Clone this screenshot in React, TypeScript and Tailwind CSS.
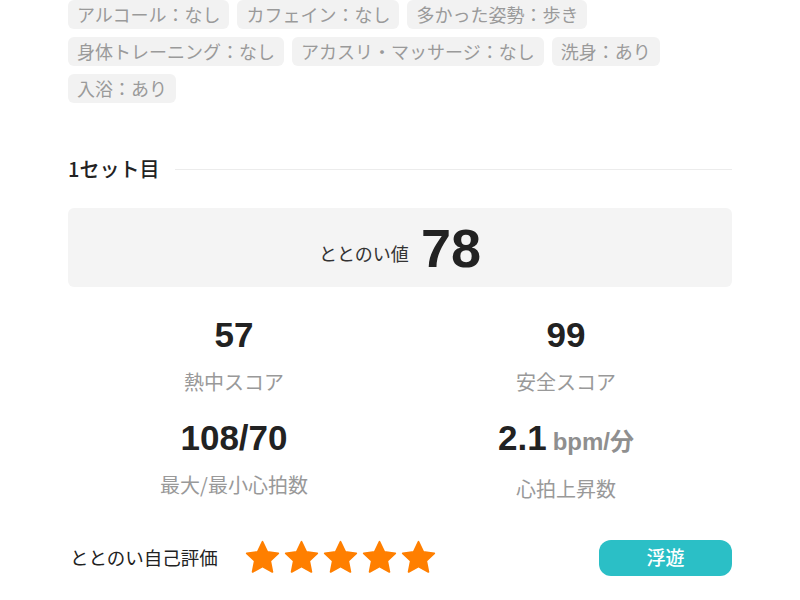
const tags = [
  ["アルコール：なし", "カフェイン：なし", "多かった姿勢：歩き"],
  ["身体トレーニング：なし", "アカスリ・マッサージ：なし", "洗身：あり"],
  ["入浴：あり"],
];

const jp = "font-['Noto_Sans_CJK_JP','Noto_Sans',sans-serif]";
const num = "font-['Liberation_Sans','Noto_Sans_CJK_JP',sans-serif]";

function Star() {
  return (
    <svg width="37" height="37" viewBox="0 0 24 24">
      <path
        d="M12 1.8l3.1 6.6 7.1.9-5.2 4.9 1.4 7.1L12 17.8l-6.4 3.5 1.4-7.1-5.2-4.9 7.1-.9z"
        fill="#ff7f00"
        stroke="#ff7f00"
        strokeWidth="1.2"
        strokeLinejoin="round"
      />
    </svg>
  );
}

function Stat({ value, unit, label }: { value: string; unit?: string; label: string }) {
  return (
    <div className="flex flex-col items-center">
      <div className={`${num} flex items-baseline gap-1.5 text-[35px] font-bold leading-[40px] text-[#222]`}>
        {value}
        {unit && <span className="text-[24px] font-bold text-[#8f8f8f]">{unit}</span>}
      </div>
      <div className={`${jp} mt-[13px] text-[20px] leading-[28px] text-[#999]`}>{label}</div>
    </div>
  );
}

export default function App() {
  return (
    <div className={`${jp} h-[600px] w-[800px] overflow-hidden bg-white px-[68px]`}>
      <div className="flex flex-col gap-2">
        {tags.map((row, i) => (
          <div key={i} className="flex gap-2">
            {row.map((t) => (
              <span
                key={t}
                className="h-[29px] rounded-md bg-[#f2f2f2] px-[9px] text-[18px] leading-[29px] text-[#9a9a9a]"
              >
                {t}
              </span>
            ))}
          </div>
        ))}
      </div>

      <div className="mt-[54px] flex items-center gap-4">
        <h2 className="text-[20px] font-medium leading-6 text-[#222]">1セット目</h2>
        <div className="h-px flex-1 bg-[#ececec]" />
      </div>

      <div className="mt-[27px] flex h-[79px] items-center justify-center gap-3 rounded-md bg-[#f4f4f4]">
        <span className="mt-3 text-[18px] text-[#333]">ととのい値</span>
        <span className={`${num} text-[54px] font-bold leading-none text-[#222]`}>78</span>
      </div>

      <div className="mt-[28px] grid grid-cols-2 gap-y-[22px]">
        <Stat value="57" label="熱中スコア" />
        <Stat value="99" label="安全スコア" />
        <Stat value="108/70" label="最大/最小心拍数" />
        <Stat value="2.1" unit="bpm/分" label="心拍上昇数" />
      </div>

      <div className="mt-[36px] flex items-center">
        <span className="ml-[2px] text-[18.5px] text-[#222]">ととのい自己評価</span>
        <div className="ml-[26px] flex gap-[2px]">
          {[0, 1, 2, 3, 4].map((i) => (
            <Star key={i} />
          ))}
        </div>
        <button className="ml-auto h-[36px] w-[133px] rounded-xl bg-[#2bbfc6] text-[19px] font-medium text-white">
          浮遊
        </button>
      </div>
    </div>
  );
}
